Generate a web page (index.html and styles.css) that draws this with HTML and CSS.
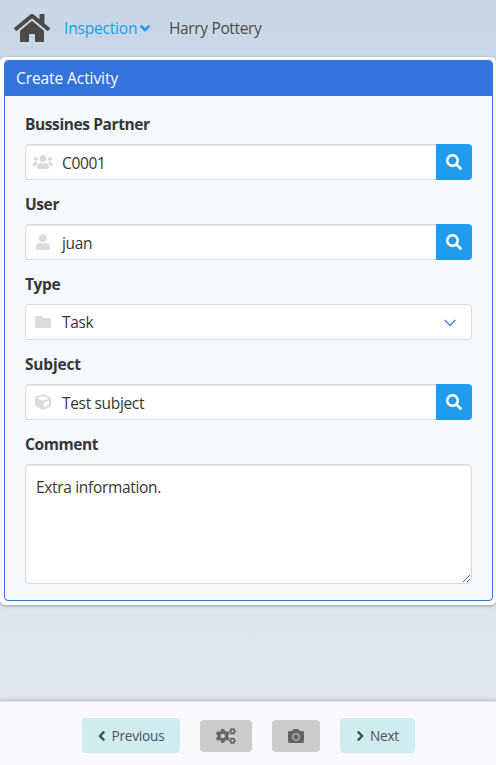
FILE: index.html
```html
<!DOCTYPE html>
<html lang="en">
<head>
<meta charset="utf-8">
<title>Create Activity</title>
<link rel="stylesheet" href="styles.css">
</head>
<body>
<svg class="defs" aria-hidden="true">
  <symbol id="search" viewBox="0 0 512 512"><path d="M505 442.7L405.300 343c-4.500-4.500-10.600-7-17-7H372c27.600-35.300 44-79.700 44-128C416 93.100 322.900 0 208 0S0 93.100 0 208s93.100 208 208 208c48.300 0 92.700-16.400 128-44v16.300c0 6.400 2.500 12.500 7 17l99.700 99.700c9.400 9.400 24.600 9.400 33.900 0l28.300-28.300c9.400-9.400 9.400-24.600.1-34zM208 336c-70.700 0-128-57.200-128-128 0-70.700 57.200-128 128-128 70.700 0 128 57.200 128 128 0 70.700-57.200 128-128 128z"/></symbol>
  <symbol id="small-cog" viewBox="0 0 640 512"><path fill-rule="evenodd" d="M512.1 191l-8.200 14.300c-3 5.300-9.400 7.500-15.100 5.400-11.800-4.400-22.600-10.700-32.100-18.600-4.600-3.800-5.800-10.500-2.800-15.700l8.200-14.300c-6.900-8-12.300-17.300-15.900-27.400h-16.500c-6 0-11.200-4.300-12.200-10.300-2-12-2.100-24.600 0-37.100 1-6 6.200-10.400 12.200-10.400h16.500c3.600-10.100 9-19.400 15.900-27.400l-8.200-14.300c-3-5.200-1.900-11.900 2.800-15.700 9.500-7.900 20.400-14.200 32.100-18.600 5.700-2.100 12.100.1 15.100 5.400l8.200 14.300c10.500-1.900 21.200-1.900 31.700 0L552 6.300c3-5.300 9.400-7.500 15.100-5.400 11.800 4.400 22.600 10.700 32.100 18.600 4.600 3.800 5.800 10.500 2.800 15.700l-8.200 14.300c6.900 8 12.300 17.300 15.900 27.400h16.500c6 0 11.200 4.300 12.200 10.300 2 12 2.100 24.600 0 37.100-1 6-6.200 10.400-12.200 10.400h-16.500c-3.600 10.100-9 19.400-15.900 27.400l8.200 14.300c3 5.200 1.900 11.900-2.800 15.700-9.500 7.900-20.400 14.200-32.100 18.600-5.700 2.100-12.100-.1-15.100-5.400l-8.200-14.300c-10.400 1.900-21.200 1.900-31.700 0zm-10.500-58.800c38.500 29.600 82.400-14.300 52.800-52.800-38.500-29.700-82.400 14.300-52.800 52.800z"/></symbol>
</svg>

<nav class="navbar">
  <svg class="home" viewBox="0 0 576 512"><path d="M280.370 148.260L96 300.110V464a16 16 0 0 0 16 16l112.060-.29a16 16 0 0 0 15.920-16V368a16 16 0 0 1 16-16h64a16 16 0 0 1 16 16v95.640a16 16 0 0 0 16 16.050L464 480a16 16 0 0 0 16-16V300L295.670 148.260a12.190 12.190 0 0 0-15.300 0zM571.600 251.470L488 182.560V44.050a12 12 0 0 0-12-12h-56a12 12 0 0 0-12 12v72.610L318.470 43a48 48 0 0 0-61 0L4.340 251.470a12 12 0 0 0-1.600 16.900l25.500 31A12 12 0 0 0 45.150 301l235.220-193.740a12.190 12.190 0 0 1 15.300 0L530.900 301a12 12 0 0 0 16.900-1.600l25.500-31a12 12 0 0 0-1.700-16.930z"/></svg>
  <a class="nav-link"><span class="nav-text">Inspection</span><svg class="nav-caret" viewBox="0 0 10 7"><path d="M1.200 1.500 5 5.200 8.800 1.500"/></svg></a>
  <span class="nav-user">Harry Pottery</span>
</nav>

<main class="card">
  <section class="panel">
    <header class="panel-head"><span class="title">Create Activity</span></header>
    <form class="form">
      <div class="field">
        <label class="label">Bussines Partner</label>
        <div class="addons">
          <div class="control"><span class="icon"><svg class="w20" viewBox="0 0 640 512"><path d="M96 224c35.300 0 64-28.700 64-64s-28.700-64-64-64-64 28.700-64 64 28.700 64 64 64zm448 0c35.300 0 64-28.700 64-64s-28.700-64-64-64-64 28.700-64 64 28.700 64 64 64zm32 32h-64c-17.600 0-33.500 7.100-45.100 18.600 40.300 22.100 68.900 62 75.100 109.400h66c17.700 0 32-14.300 32-32v-32c0-35.300-28.700-64-64-64zm-256 0c61.900 0 112-50.100 112-112S381.900 32 320 32 208 82.100 208 144s50.100 112 112 112zm76.800 32h-8.300c-20.800 10-43.900 16-68.500 16s-47.600-6-68.500-16h-8.300C179.600 288 128 339.600 128 403.200V432c0 26.500 21.500 48 48 48h288c26.500 0 48-21.500 48-48v-28.800c0-63.600-51.600-115.200-115.200-115.200zm-223.700-13.400C161.500 263.100 145.600 256 128 256H64c-35.300 0-64 28.700-64 64v32c0 17.700 14.300 32 32 32h65.900c6.300-47.400 34.900-87.300 75.200-109.400z"/></svg></span><span class="value">C0001</span></div>
          <button class="search" type="button"><svg><use href="#search"/></svg></button>
        </div>
      </div>
      <div class="field">
        <label class="label">User</label>
        <div class="addons">
          <div class="control"><span class="icon"><svg class="w14" viewBox="0 0 448 512"><path d="M224 256c70.700 0 128-57.300 128-128S294.700 0 224 0 96 57.300 96 128s57.300 128 128 128zm89.600 32h-16.700c-22.200 10.200-46.900 16-72.900 16s-50.600-5.800-72.900-16h-16.700C60.200 288 0 348.200 0 422.400V464c0 26.500 21.500 48 48 48h352c26.500 0 48-21.500 48-48v-41.600c0-74.200-60.200-134.400-134.400-134.400z"/></svg></span><span class="value">juan</span></div>
          <button class="search" type="button"><svg><use href="#search"/></svg></button>
        </div>
      </div>
      <div class="field">
        <label class="label">Type</label>
        <div class="control select"><span class="icon"><svg class="w16" viewBox="0 0 512 512"><path d="M464 128H272l-64-64H48C21.500 64 0 85.500 0 112v288c0 26.500 21.500 48 48 48h416c26.500 0 48-21.500 48-48V176c0-26.500-21.500-48-48-48z"/></svg></span><span class="value">Task</span><svg class="chevron" viewBox="0 0 12 8"><path d="M.7 1 6 6.300 11.300 1"/></svg></div>
      </div>
      <div class="field">
        <label class="label subject">Subject</label>
        <div class="addons">
          <div class="control"><span class="icon"><svg class="w16" viewBox="0 0 512 512"><path d="M239.100 6.300l-208 78c-18.700 7-31.100 25-31.100 45v225.100c0 18.200 10.300 34.800 26.500 42.900l208 104c13.500 6.800 29.400 6.800 42.900 0l208-104c16.300-8.100 26.500-24.800 26.500-42.900V129.300c0-20-12.400-37.900-31.100-44.900l-208-78C262 2.200 250 2.200 239.100 6.300zM256 68.400l192 72v1.100l-192 78-192-78v-1.100l192-72zm32 356V275.500l160-65v133.900l-160 80z"/></svg></span><span class="value">Test subject</span></div>
          <button class="search" type="button"><svg><use href="#search"/></svg></button>
        </div>
      </div>
      <div class="field">
        <label class="label">Comment</label>
        <textarea class="comment">Extra information.</textarea>
      </div>
    </form>
  </section>
</main>

<footer class="footer">
  <button class="step previous" type="button"><svg viewBox="0 0 8 12"><path d="M6.200 1.700 2 6l4.200 4.300"/></svg><span>Previous</span></button>
  <button class="tool cogs" type="button"><svg viewBox="0 0 640 512"><path fill-rule="evenodd" d="M386.300 286.100l33.700 16.800c10.100 5.800 14.500 18.100 10.500 29.100-8.900 24.200-26.400 46.400-42.600 65.800-7.400 8.900-20.200 11.100-30.300 5.300l-29.100-16.800c-16 13.700-34.600 24.600-54.900 31.700v33.600c0 11.600-8.300 21.600-19.700 23.600-24.600 4.200-50.400 4.400-75.900 0-11.500-2-20-11.900-20-23.600V418c-20.300-7.200-38.900-18-54.900-31.700L74 403c-10 5.800-22.900 3.600-30.300-5.300-16.200-19.400-33.300-41.600-42.200-65.700-4-10.900.4-23.200 10.500-29.100l33.300-16.800c-3.900-20.900-3.900-42.400 0-63.400L12 205.800c-10.100-5.800-14.600-18.100-10.500-29 8.900-24.200 26-46.400 42.200-65.800 7.400-8.900 20.200-11.100 30.300-5.300l29.100 16.800c16-13.700 34.600-24.600 54.900-31.700V57.100c0-11.500 8.200-21.500 19.600-23.500 24.600-4.200 50.500-4.400 76-.1 11.500 2 20 11.900 20 23.600v33.600c20.300 7.200 38.900 18 54.900 31.700l29.100-16.800c10-5.800 22.900-3.600 30.300 5.300 16.200 19.400 33.200 41.600 42.100 65.800 4 10.900.1 23.200-10 29.100l-33.700 16.800c3.900 21 3.900 42.500 0 63.500zm-117.600 21.100c59.200-77-28.700-164.900-105.700-105.700-59.200 77 28.700 164.900 105.700 105.700z"/><use href="#small-cog" width="640" height="512"/><use href="#small-cog" y="301" width="640" height="512"/></svg></button>
  <button class="tool camera" type="button"><svg viewBox="0 0 512 512"><path d="M512 144v288c0 26.500-21.500 48-48 48H48c-26.500 0-48-21.500-48-48V144c0-26.500 21.500-48 48-48h88l12.300-32.900c7-18.700 24.900-31.100 44.900-31.100h125.500c20 0 37.900 12.400 44.900 31.100L376 96h88c26.500 0 48 21.500 48 48zM376 288c0-66.200-53.800-120-120-120s-120 53.800-120 120 53.800 120 120 120 120-53.800 120-120zm-32 0c0 48.500-39.500 88-88 88s-88-39.500-88-88 39.500-88 88-88 88 39.500 88 88z"/></svg></button>
  <button class="step next" type="button"><svg viewBox="0 0 8 12"><path d="M1.800 1.700 6 6l-4.200 4.300"/></svg><span>Next</span></button>
</footer>
</body>
</html>
```
FILE: styles.css
```css
* { box-sizing: border-box; }
html, body { height: 100%; margin: 0; }
body {
  display: flex;
  flex-direction: column;
  overflow: hidden;
  background: linear-gradient(#c8d7e5 0, #c9d8e6 60px, #e0e7ef 700px);
  font: 16px/24px "Open Sans", "Noto Sans", sans-serif;
  color: #363636;
}
button { border: 0; padding: 0; font: inherit; }
.defs { position: absolute; width: 0; height: 0; }

.navbar { display: flex; align-items: center; height: 57px; padding: 0 0 1px 14px; color: #4a4a4a; flex: none; }
.home { width: 36px; height: 32px; fill: #4a4a4a; }
.nav-link { display: flex; align-items: center; margin-left: 14px; color: #209cee; }
.nav-text { width: 75px; font-size: 15.5px; letter-spacing: -.18px; white-space: nowrap; }
.nav-caret { width: 12px; height: 8px; fill: none; stroke: #209cee; stroke-width: 2.3; }
.nav-user { margin-left: 18px; font-size: 15.5px; letter-spacing: -.35px; }

.card { flex: none; height: 548px; padding: 3px 3px 4px 4px; border-radius: 5px; background: #fff; box-shadow: 0 1px 3px rgba(10, 10, 10, .35); }
.panel { height: 541px; border: 1px solid #3273dc; border-radius: 4px; background: #f5f9fe; overflow: hidden; }
.panel-head { height: 35px; padding: 5px 11px; background: #3273dc; color: #fff; }
.title { font-size: 15.5px; letter-spacing: -.08px; }
.form { padding: 16px 20px 0; }
.field { height: 80px; }
.label { display: block; height: 32px; font-size: 15.5px; font-weight: 700; letter-spacing: -.4px; }
.subject { letter-spacing: -.2px; }
.addons { display: flex; }
.control { display: flex; align-items: center; flex: 1; height: 36px; border: 1px solid #dbdbdb; border-radius: 4px 0 0 4px; background: #fff; box-shadow: inset 0 1px 2px rgba(10, 10, 10, .1); }
.addons .control { border-right: 0; }
.icon { display: flex; justify-content: center; width: 36px; margin-left: -1px; }
.icon svg { height: 16px; fill: #dbdbdb; }
.w20 { width: 20px; }
.w14 { width: 14px; }
.w16 { width: 16px; }
.value { margin-left: 1px; padding-top: 2px; font-size: 15.5px; letter-spacing: -.33px; }
.search { display: grid; place-items: center; width: 36px; height: 36px; border-radius: 0 4px 4px 0; background: #209cee; }
.search svg { width: 16px; height: 16px; fill: #fff; }
.select { border-radius: 4px; box-shadow: none; }
.select .value { padding-top: 0; }
.chevron { width: 12px; height: 8px; margin: 2px 15px 0 auto; fill: none; stroke: #3273dc; stroke-width: 1.2; }
.comment { display: block; width: 100%; height: 120px; padding: 10px; border: 1px solid #dbdbdb; border-radius: 4px; outline: 0; background: #fff; box-shadow: inset 0 1px 2px rgba(10, 10, 10, .1); color: #363636; font: inherit; font-size: 15.5px; letter-spacing: -.33px; resize: vertical; }

.footer { display: flex; justify-content: center; align-items: center; gap: 20px; height: 64px; margin-top: auto; padding: 4px 0 0 1px; border-top: 1px solid #e4e8ee; background: #f7f9fc; box-shadow: 0 -1px 4px rgba(10, 10, 10, .2); flex: none; }
.footer button { display: flex; align-items: center; justify-content: center; border-radius: 4px; color: #4a525b; }
.footer .step { height: 35px; gap: 6px; background: #d1ecf1; font-size: 13.6px; letter-spacing: -.2px; }
.step svg { width: 8px; height: 12px; fill: none; stroke: #454c54; stroke-width: 2.4; }
.previous { width: 98px; }
.next { width: 75px; }
.tool { height: 32px; background: #ccc; }
.tool svg { height: 16px; fill: #666; overflow: visible; }
.cogs { width: 52px; }
.cogs svg { width: 20px; }
.camera { width: 48px; }
.camera svg { width: 16px; }
```
